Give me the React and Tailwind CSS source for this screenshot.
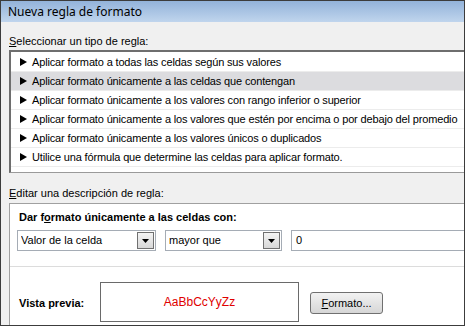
import React from 'react'

const RULES = [
  'Aplicar formato a todas las celdas según sus valores',
  'Aplicar formato únicamente a las celdas que contengan',
  'Aplicar formato únicamente a los valores con rango inferior o superior',
  'Aplicar formato únicamente a los valores que estén por encima o por debajo del promedio',
  'Aplicar formato únicamente a los valores únicos o duplicados',
  'Utilice una fórmula que determine las celdas para aplicar formato.',
]

function Combo({ value, width }) {
  return (
    <div className={`${width} h-[21px] flex items-center bg-white border border-[#a5acb5] pl-[3px] pr-[1px]`}>
      <span className="flex-1 truncate">{value}</span>
      <div className="w-[17px] h-[17px] flex items-center justify-center border border-[#707070] bg-gradient-to-b from-[#f4f4f4] to-[#d8d8d8]">
        <svg width="7" height="4" viewBox="0 0 7 4"><path d="M0 0h7L3.5 4z" fill="#000" /></svg>
      </div>
    </div>
  )
}

export default function App() {
  return (
    <div className="w-[465px] h-[326px] overflow-hidden bg-[#f0f0f0] border border-[#3c3c3c] flex flex-col text-[11px] text-black font-['Liberation_Sans',sans-serif]">
      {/* title bar */}
      <div className="h-[21px] shrink-0 flex items-center pl-[7px] bg-gradient-to-b from-[#93b3da] to-[#c0d5ed] text-[12px] font-['Noto_Sans',sans-serif]">
        Nueva regla de formato
      </div>

      <div className="flex-1 flex flex-col pl-[8px]">
        <div className="mt-[12px] h-[14px] flex items-center">
          <span><u>S</u>eleccionar un tipo de regla:</span>
        </div>

        {/* rule list */}
        <div className="mt-[2px] h-[123px] shrink-0 bg-white border-t-2 border-l-2 border-[#6e6e6e] border-b border-b-[#9a9a9a] flex flex-col pt-[1px]">
          {RULES.map((r, i) => (
            <div
              key={r}
              className={`h-[19px] flex items-center pl-[9px] border-b border-[#ececec] ${i === 1 ? 'bg-[#dcdcdf]' : ''}`}
            >
              <svg width="7" height="8" viewBox="0 0 7 8" className="mr-[5px] shrink-0">
                <path d="M0 0L7 4L0 8z" fill="#000" />
              </svg>
              <span className="whitespace-nowrap tracking-[-0.15px]">{r}</span>
            </div>
          ))}
        </div>

        <div className="mt-[13px] h-[14px] flex items-center">
          <span><u>E</u>ditar una descripción de regla:</span>
        </div>

        {/* description panel */}
        <div className="mt-[3px] flex-1 bg-white border-t border-l border-[#a0a0a0] flex flex-col">
          <div className="pl-[9px] pr-[8px] pt-[6px]">
            <div className="font-bold h-[14px] flex items-center">
              Dar f<u>o</u>rmato únicamente a las celdas con:
            </div>
            <div className="mt-[6px] flex items-center gap-[9px] -ml-[2px]">
              <Combo value="Valor de la celda" width="w-[139px]" />
              <Combo value="mayor que" width="w-[117px]" />
              <div className="flex-1 h-[21px] flex items-center bg-white border border-[#a5acb5] pl-[4px] -mr-[10px]">0</div>
            </div>
          </div>
          <div className="mt-[15px] h-px bg-[#dcdcdc]" />
          <div className="flex items-center pl-[9px] mt-[15px]">
            <span className="font-bold w-[81px] mt-[2px]">Vista previa:</span>
            <div className="w-[199px] h-[40px] border border-[#6a6a6a] flex items-center justify-center text-[#e00000] text-[12px]">
              AaBbCcYyZz
            </div>
            <button className="ml-[11px] mt-[2px] w-[73px] h-[22px] rounded-[3px] border border-[#707070] bg-gradient-to-b from-[#f2f2f2] to-[#d6d6d6] flex items-center justify-center">
              <span><u>F</u>ormato...</span>
            </button>
          </div>
        </div>
      </div>
    </div>
  )
}
